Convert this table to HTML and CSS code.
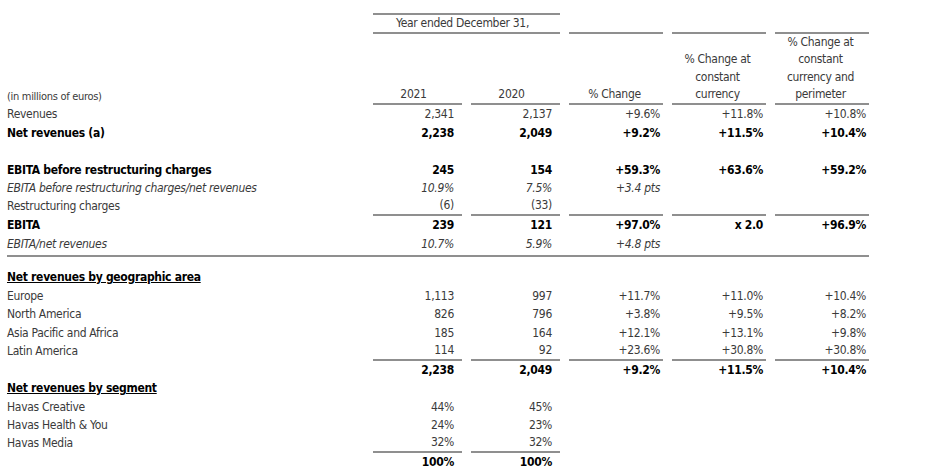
FILE: index.html
```html
<!DOCTYPE html>
<html>
<head>
<meta charset="utf-8">
<link rel="stylesheet" href="styles.css">
</head>
<body>
<table class="fin">
  <colgroup>
    <col class="w-label"><col class="w-yr"><col class="w-yr"><col class="w-pc"><col class="w-pc"><col class="w-pc">
  </colgroup>
  <tr class="row-top">
    <td></td>
    <td colspan="2" class="yr">Year ended December 31,</td>
    <td class="rule"></td><td class="rule"></td><td class="rule"></td>
  </tr>
  <tr class="row-head">
    <td class="unit">(in millions of euros)</td>
    <td class="hd">2021</td>
    <td class="hd">2020</td>
    <td class="hd">% Change</td>
    <td class="hd">% Change at<br>constant<br>currency</td>
    <td class="hd">% Change at<br>constant<br>currency and<br>perimeter</td>
  </tr>
  <tr><td>Revenues</td><td>2,341</td><td>2,137</td><td>+9.6%</td><td>+11.8%</td><td>+10.8%</td></tr>
  <tr class="b"><td>Net revenues (a)</td><td>2,238</td><td>2,049</td><td>+9.2%</td><td>+11.5%</td><td>+10.4%</td></tr>
  <tr><td>&nbsp;</td><td></td><td></td><td></td><td></td><td></td></tr>
  <tr class="b"><td>EBITA before restructuring charges</td><td>245</td><td>154</td><td>+59.3%</td><td>+63.6%</td><td>+59.2%</td></tr>
  <tr class="i"><td>EBITA before restructuring charges/net revenues</td><td>10.9%</td><td>7.5%</td><td>+3.4 pts</td><td></td><td></td></tr>
  <tr class="ul"><td>Restructuring charges</td><td>(6)</td><td>(33)</td><td></td><td></td><td></td></tr>
  <tr class="b"><td>EBITA</td><td>239</td><td>121</td><td>+97.0%</td><td>x 2.0</td><td>+96.9%</td></tr>
  <tr class="i"><td>EBITA/net revenues</td><td>10.7%</td><td>5.9%</td><td>+4.8 pts</td><td></td><td></td></tr>
  <tr class="sep"><td colspan="6"></td></tr>
  <tr class="gap"><td colspan="6"></td></tr>
  <tr class="b"><td class="sec">Net revenues by geographic area</td><td></td><td></td><td></td><td></td><td></td></tr>
  <tr><td>Europe</td><td>1,113</td><td>997</td><td>+11.7%</td><td>+11.0%</td><td>+10.4%</td></tr>
  <tr><td>North America</td><td>826</td><td>796</td><td>+3.8%</td><td>+9.5%</td><td>+8.2%</td></tr>
  <tr><td>Asia Pacific and Africa</td><td>185</td><td>164</td><td>+12.1%</td><td>+13.1%</td><td>+9.8%</td></tr>
  <tr class="ul"><td>Latin America</td><td>114</td><td>92</td><td>+23.6%</td><td>+30.8%</td><td>+30.8%</td></tr>
  <tr class="b"><td></td><td>2,238</td><td>2,049</td><td>+9.2%</td><td>+11.5%</td><td>+10.4%</td></tr>
  <tr class="b"><td class="sec">Net revenues by segment</td><td></td><td></td><td></td><td></td><td></td></tr>
  <tr><td>Havas Creative</td><td>44%</td><td>45%</td><td></td><td></td><td></td></tr>
  <tr><td>Havas Health &amp; You</td><td>24%</td><td>23%</td><td></td><td></td><td></td></tr>
  <tr class="ul2"><td>Havas Media</td><td>32%</td><td>32%</td><td></td><td></td><td></td></tr>
  <tr class="b"><td></td><td>100%</td><td>100%</td><td></td><td></td><td></td></tr>
</table>
</body>
</html>
```

FILE: styles.css
```css
html, body {
  margin: 0;
  background: #ffffff;
}
body {
  font-family: "DejaVu Sans Condensed", "DejaVu Sans", sans-serif;
  font-stretch: condensed;
  font-size: 12px;
  letter-spacing: -0.3px;
  color: #3a3a3a;
}
.fin {
  border-collapse: separate;
  border-spacing: 9px 0;
  margin: 13px 0 0 -2px;
  table-layout: fixed;
}
.w-label { width: 357px; }
.w-yr { width: 89px; }
.w-pc { width: 94px; }
.fin td {
  padding: 0;
  height: 18.5px;
  line-height: 18.5px;
  text-align: right;
  white-space: nowrap;
  vertical-align: middle;
}
.fin td:first-child { text-align: left; }
.fin td:nth-child(2),
.fin td:nth-child(3) { padding-right: 8px; }
.fin td:nth-child(4),
.fin td:nth-child(5),
.fin td:nth-child(6) { padding-right: 3px; }

.row-top td { height: 17px; line-height: 17px; }
.row-top .yr {
  text-align: center;
  padding-right: 0;
  border-top: 2px solid #8f8f8f;
  border-bottom: 2px solid #8f8f8f;
}
.row-top .rule { border-bottom: 2px solid #8f8f8f; }

.row-head td {
  vertical-align: bottom;
  line-height: 17.3px;
  height: auto;
}
.row-head .hd {
  text-align: center;
  padding-right: 0;
  border-bottom: 2px solid #8f8f8f;
}
.row-head .unit { font-size: 11px; }

.b td { font-weight: bold; color: #000; }
.i td { font-style: italic; }
.ul td { height: 16.5px; line-height: 15px; }
.ul td:not(:first-child) { border-bottom: 2px solid #8f8f8f; }
.ul2 td { height: 16.5px; line-height: 15px; }
.ul2 td:nth-child(2),
.ul2 td:nth-child(3) { border-bottom: 2px solid #8f8f8f; }

.fin .sep td { height: 2px; line-height: 0; border-bottom: 2px solid #8f8f8f; }
.fin .gap td { height: 11px; line-height: 0; }
.fin td.sec { text-decoration: underline; }
```
